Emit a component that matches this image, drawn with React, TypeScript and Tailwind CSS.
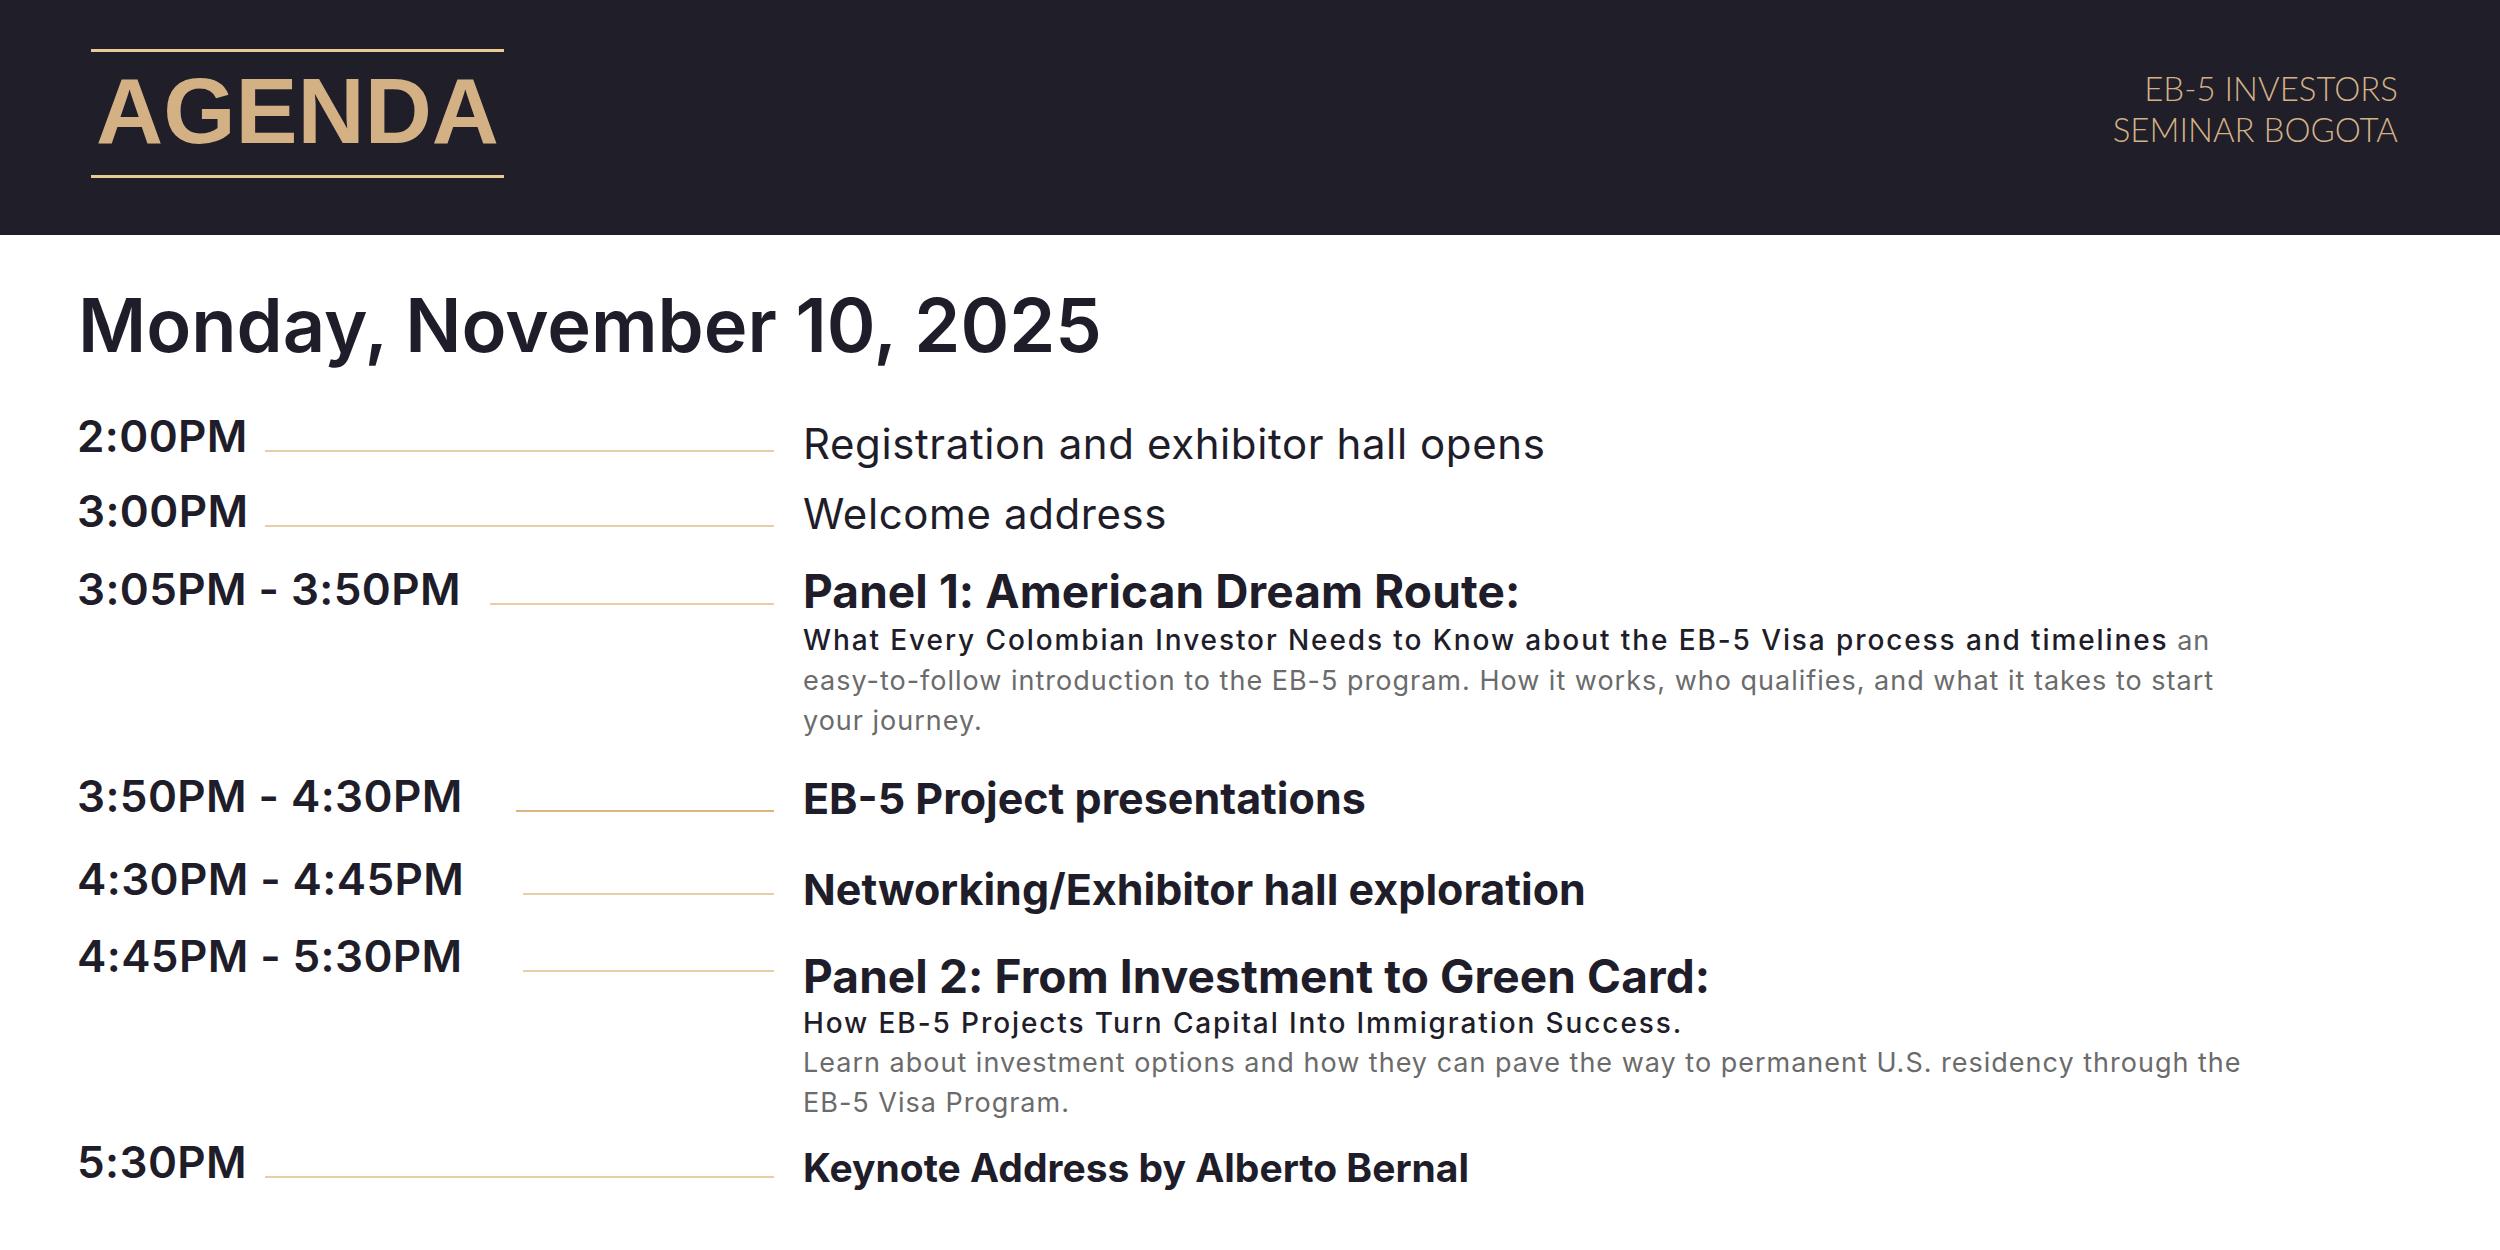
import type { ReactNode } from "react";

type Slot = {
  time: string;
  lineW: string;
  gap: string;
  drop: string;
  body: ReactNode;
};

const plain = "text-[42px] leading-[44px] tracking-[0.6px]";
const panel = "text-[46px] font-bold leading-[44px] tracking-[0.1px]";
const strong = "text-[43px] font-bold leading-[44px]";
const lead = "text-[28px] font-medium leading-[40px] tracking-[1.9px]";
const desc = "text-[27px] leading-[40px] tracking-[1px] text-[#6b6b6b]";

const slots: Slot[] = [
  {
    time: "2:00PM",
    lineW: "w-[509px] bg-[#e6cfa8]",
    gap: "mt-[52px]",
    drop: "mt-[8px]",
    body: <p className={plain}>Registration and exhibitor hall opens</p>,
  },
  {
    time: "3:00PM",
    lineW: "w-[509px] bg-[#e6cfa8]",
    gap: "mt-[23px]",
    drop: "mt-[3px]",
    body: <p className={plain}>Welcome address</p>,
  },
  {
    time: "3:05PM - 3:50PM",
    lineW: "w-[284px] bg-[#e6cfa8]",
    gap: "mt-[31px]",
    drop: "mt-[2px]",
    body: (
      <>
        <h3 className={panel}>Panel 1: American Dream Route:</h3>
        <p className={`mt-[7px] ${desc}`}>
          <span className={`text-[#1e1d29] ${lead}`}>
            What Every Colombian Investor Needs to Know about the EB-5 Visa
            process and timelines
          </span>{" "}
          an
          <br />
          easy-to-follow introduction to the EB-5 program. How it works, who
          qualifies, and what it takes to start
          <br />
          your journey.
        </p>
      </>
    ),
  },
  {
    time: "3:50PM - 4:30PM",
    lineW: "w-[258px] bg-[#dcb47f]",
    gap: "mt-[33px]",
    drop: "mt-[2px]",
    body: <h3 className={strong}>EB-5 Project presentations</h3>,
  },
  {
    time: "4:30PM - 4:45PM",
    lineW: "w-[251px] bg-[#e6cfa8]",
    gap: "mt-[37px]",
    drop: "mt-[10px]",
    body: <h3 className={strong}>Networking/Exhibitor hall exploration</h3>,
  },
  {
    time: "4:45PM - 5:30PM",
    lineW: "w-[251px] bg-[#e6cfa8]",
    gap: "mt-[23px]",
    drop: "mt-[20px]",
    body: (
      <>
        <h3 className={panel}>Panel 2: From Investment to Green Card:</h3>
        <p className={`mt-[5px] ${lead}`}>
          How EB-5 Projects Turn Capital Into Immigration Success.
        </p>
        <p className={desc}>
          Learn about investment options and how they can pave the way to
          permanent U.S. residency through the
          <br />
          EB-5 Visa Program.
        </p>
      </>
    ),
  },
  {
    time: "5:30PM",
    lineW: "w-[509px] bg-[#e6cfa8]",
    gap: "mt-[17px]",
    drop: "mt-[6px]",
    body: (
      <h3 className="text-[39px] font-bold leading-[44px]">
        Keynote Address by Alberto Bernal
      </h3>
    ),
  },
];

export default function App() {
  return (
    <div className="min-h-[1250px] w-full bg-white font-['Inter',sans-serif] text-[#1e1d29]">
      <header className="flex h-[235px] items-start justify-between bg-[#1f1e29] pr-[102px] pl-[91px]">
        <div className="mt-[49px] w-[413px]">
          <div className="h-[3px] bg-[#e9c995]" />
          <h1 className="mt-[13px] text-center font-['Liberation_Sans',sans-serif] text-[93px] leading-none font-bold text-[#d4b185]">
            AGENDA
          </h1>
          <div className="mt-[17px] h-[3px] bg-[#e9c995]" />
        </div>
        <div className="mt-[68px] text-right font-['Lato',sans-serif] text-[33px] leading-[41px] font-light text-[#d4b185]">
          <p>EB-5 INVESTORS</p>
          <p>SEMINAR BOGOTA</p>
        </div>
      </header>

      <main className="pb-10">
        <h2 className="mt-[53px] ml-[78px] text-[74px] leading-none font-semibold">
          Monday, November 10, 2025
        </h2>

        {slots.map((s) => (
          <div key={s.time} className={`flex items-start ${s.gap}`}>
            <div className="ml-[77px] flex w-[697px] shrink-0 items-baseline justify-between">
              <span className="text-[44px] leading-[44px] font-semibold tracking-[0.4px]">
                {s.time}
              </span>
              <div className={`h-[2px] ${s.lineW}`} />
            </div>
            <div className={`ml-[29px] ${s.drop}`}>{s.body}</div>
          </div>
        ))}
      </main>
    </div>
  );
}
